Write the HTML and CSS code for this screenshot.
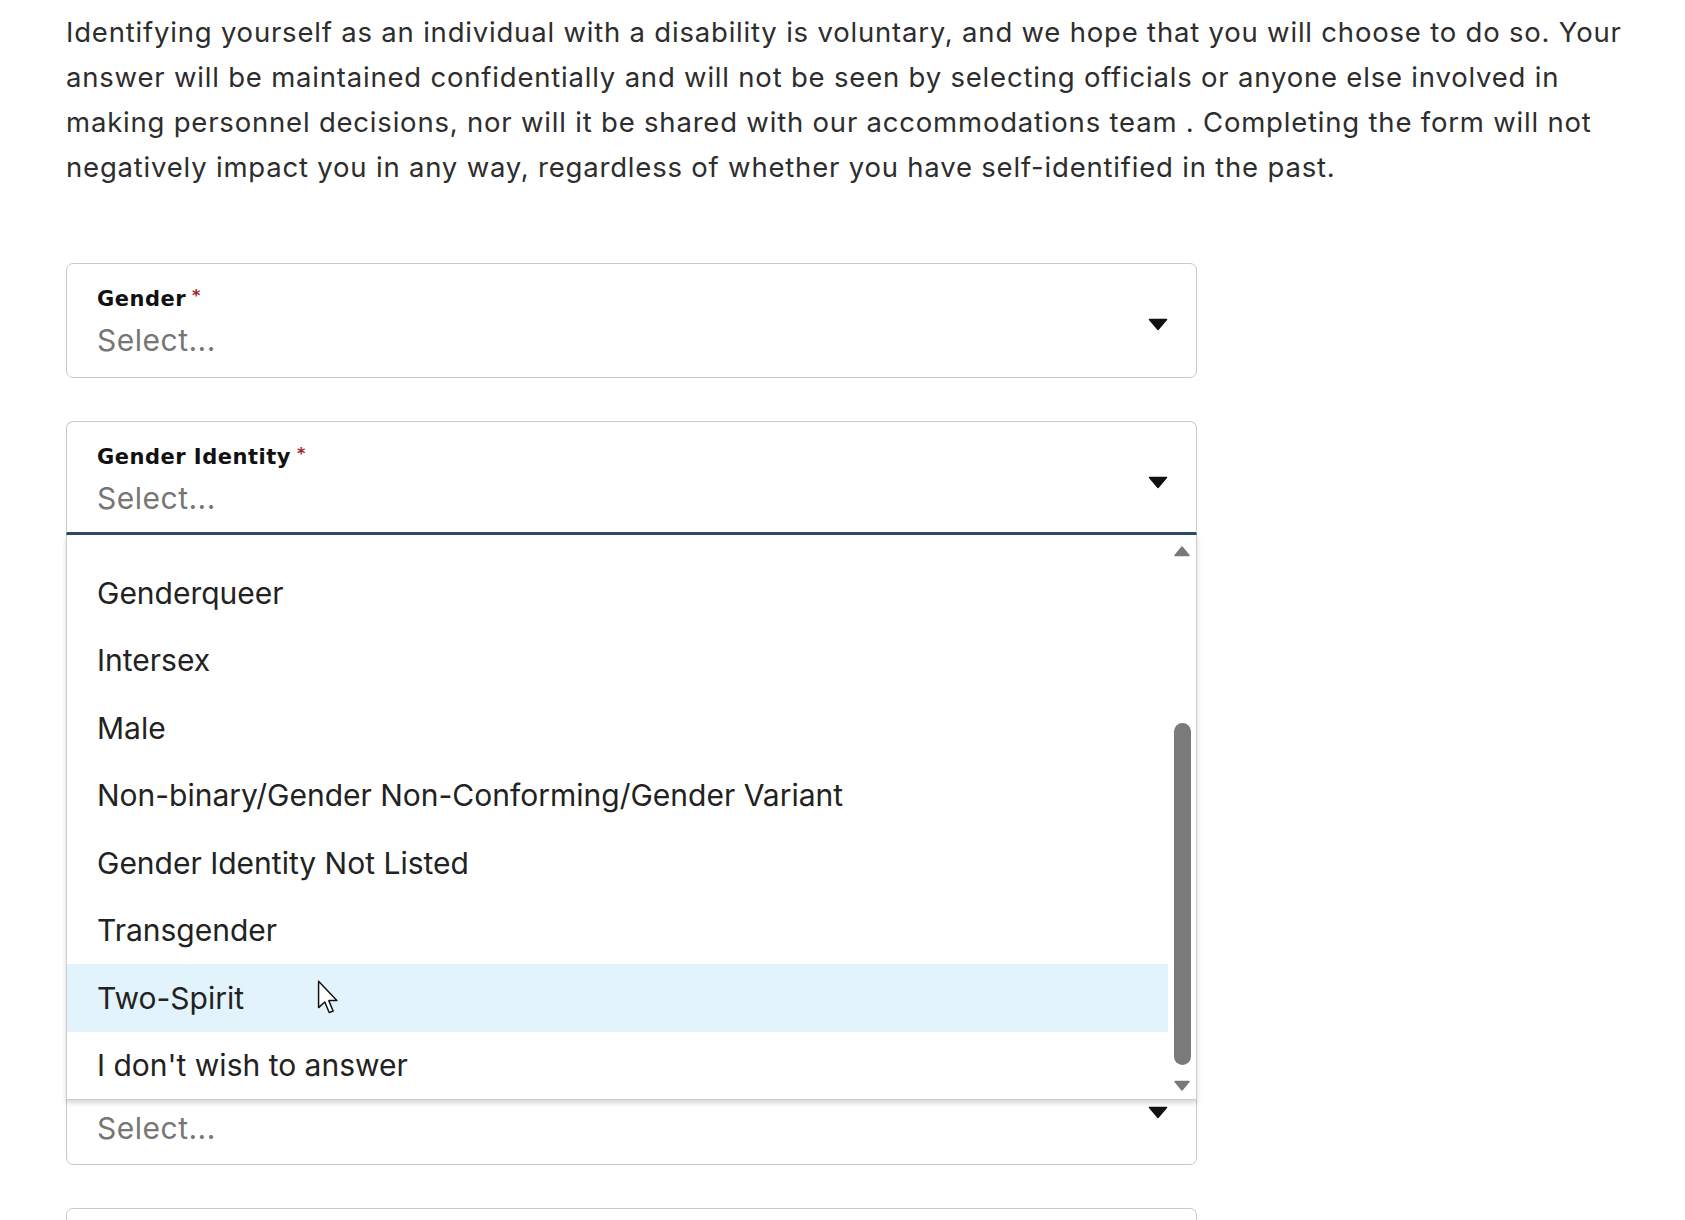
FILE: index.html
```html
<!DOCTYPE html>
<html lang="en">
<head>
<meta charset="utf-8">
<title>Voluntary Self-Identification</title>
<link rel="stylesheet" href="styles.css">
</head>
<body>
<main class="page">
  <p class="intro">Identifying yourself as an individual with a disability is voluntary, and we hope that you will choose to do so. Your answer will be maintained confidentially and will not be seen by selecting officials or anyone else involved in making personnel decisions, nor will it be shared with our accommodations team . Completing the form will not negatively impact you in any way, regardless of whether you have self-identified in the past.</p>

  <div class="eeo-form">
    <div class="select-field">
      <div class="select-text">
        <span class="select-label">Gender<span class="req">*</span></span>
        <span class="select-value">Select...</span>
      </div>
      <svg class="caret" viewBox="0 0 20 13" width="20" height="13"><path d="M1.5 1.5 H18.5 L10 11.5 Z"/></svg>
    </div>

    <div class="select-field is-open">
      <div class="select-text">
        <span class="select-label">Gender Identity<span class="req">*</span></span>
        <span class="select-value">Select...</span>
      </div>
      <svg class="caret" viewBox="0 0 20 13" width="20" height="13"><path d="M1.5 1.5 H18.5 L10 11.5 Z"/></svg>

      <div class="menu" role="listbox">
        <div class="menu-options">
          <div class="option">Agender</div>
          <div class="option">Bigender</div>
          <div class="option">Cisgender</div>
          <div class="option">Female</div>
          <div class="option">Genderqueer</div>
          <div class="option">Intersex</div>
          <div class="option">Male</div>
          <div class="option">Non-binary/Gender Non-Conforming/Gender Variant</div>
          <div class="option">Gender Identity Not Listed</div>
          <div class="option">Transgender</div>
          <div class="option is-hover">Two-Spirit</div>
          <div class="option">I don't wish to answer</div>
        </div>
        <div class="menu-scrollbar">
          <div class="sb-btn sb-up"><svg viewBox="0 0 18 12" width="18" height="12"><path d="M2 10.5 H16 L9 2 Z"/></svg></div>
          <div class="sb-track"><div class="sb-thumb" style="margin-top: 157px; height: 342px;"></div></div>
          <div class="sb-btn sb-down"><svg viewBox="0 0 18 12" width="18" height="12"><path d="M2 1.5 H16 L9 10 Z"/></svg></div>
        </div>
      </div>
    </div>

    <div class="select-field">
      <div class="select-text">
        <span class="select-label">Sexual Orientation<span class="req">*</span></span>
        <span class="select-value">Select...</span>
      </div>
      <svg class="caret" viewBox="0 0 20 13" width="20" height="13"><path d="M1.5 1.5 H18.5 L10 11.5 Z"/></svg>
    </div>

    <div class="select-field">
      <div class="select-text">
        <span class="select-label">Are you Hispanic/Latino?<span class="req">*</span></span>
        <span class="select-value">Select...</span>
      </div>
      <svg class="caret" viewBox="0 0 20 13" width="20" height="13"><path d="M1.5 1.5 H18.5 L10 11.5 Z"/></svg>
    </div>

    <div class="select-field">
      <div class="select-text">
        <span class="select-label">Race<span class="req">*</span></span>
        <span class="select-value">Select...</span>
      </div>
      <svg class="caret" viewBox="0 0 20 13" width="20" height="13"><path d="M1.5 1.5 H18.5 L10 11.5 Z"/></svg>
    </div>

    <div class="select-field">
      <div class="select-text">
        <span class="select-label">Veteran Status<span class="req">*</span></span>
        <span class="select-value">Select...</span>
      </div>
      <svg class="caret" viewBox="0 0 20 13" width="20" height="13"><path d="M1.5 1.5 H18.5 L10 11.5 Z"/></svg>
    </div>

    <div class="select-field">
      <div class="select-text">
        <span class="select-label">Disability Status<span class="req">*</span></span>
        <span class="select-value">Select...</span>
      </div>
      <svg class="caret" viewBox="0 0 20 13" width="20" height="13"><path d="M1.5 1.5 H18.5 L10 11.5 Z"/></svg>
    </div>
  </div>

  <svg class="pointer" viewBox="0 0 16 26" width="22" height="35"><path d="M1 1 V20.5 L5.6 16.3 L8.9 24.2 L11.8 23 L8.6 15.3 L14.6 15.3 Z"/></svg>
</main>
</body>
</html>
```

FILE: styles.css
```css
body {
  margin: 0;
  background: #fff;
  font-family: Inter, "Liberation Sans", Arial, sans-serif;
}

.page {
  position: relative;
  padding: 10px 40px 0 66px;
}

.intro {
  margin: 0 0 73px;
  max-width: 1570px;
  font-size: 27.5px;
  letter-spacing: 0.8px;
  line-height: 45px;
  color: #2d2d2d;
}

.eeo-form {
  width: 1131px;
  display: flex;
  flex-direction: column;
  gap: 43px;
}

/* closed select */
.select-field {
  position: relative;
  box-sizing: border-box;
  height: 114.5px;
  display: flex;
  align-items: flex-start;
  justify-content: space-between;
  padding: 23px 28px 0 30px;
  border: 1px solid #c9c9c9;
  border-radius: 7px;
  background: #fff;
}

.select-text {
  display: flex;
  flex-direction: column;
  gap: 10px;
}

.select-label {
  font-family: "DejaVu Sans", Inter, sans-serif;
  font-size: 21px;
  line-height: 25px;
  font-weight: 700;
  letter-spacing: 0.5px;
  color: #111;
}

.req {
  margin-left: 6px;
  font-size: 16px;
  line-height: 18px;
  vertical-align: top;
  color: #a3232c;
}

.select-value {
  font-size: 30px;
  letter-spacing: 0.5px;
  line-height: 37px;
  color: #767676;
}

.caret {
  flex: none;
  margin-top: 31px;
}

.caret path {
  fill: #111;
  stroke: #111;
  stroke-width: 1.5;
  stroke-linejoin: round;
}

/* open select */
.select-field.is-open {
  z-index: 2;
  border-bottom: 3px solid #2c4a6b;
  border-radius: 7px 7px 0 0;
}

.menu {
  position: absolute;
  top: calc(100% + 3px);
  left: -1px;
  right: -1px;
  height: 565px;
  box-sizing: border-box;
  display: flex;
  background: #fff;
  border: 1px solid #cdcdcd;
  border-top: 0;
  box-shadow: 0 3px 5px rgba(0, 0, 0, 0.16);
}

/* list is scrolled to its end: earlier options overflow above and are clipped */
.menu-options {
  flex: 1;
  margin-top: 25px;
  display: flex;
  flex-direction: column;
  justify-content: flex-end;
  overflow: hidden;
}

.option {
  flex: none;
  height: 67.5px;
  display: flex;
  align-items: center;
  padding-left: 30px;
  font-size: 30px;
  color: #222;
  white-space: nowrap;
}

.option.is-hover {
  background: #e2f3fc;
}

.menu-scrollbar {
  flex: none;
  width: 28px;
  display: flex;
  flex-direction: column;
  align-items: center;
}

.sb-btn {
  flex: none;
  display: flex;
  align-items: center;
  justify-content: center;
}

.sb-up {
  height: 31px;
}

.sb-down {
  height: 26px;
}

.sb-btn path {
  fill: #787878;
  stroke: #787878;
  stroke-width: 1.5;
  stroke-linejoin: round;
}

.sb-track {
  flex: 1;
  display: flex;
  flex-direction: column;
  align-items: center;
}

.sb-thumb {
  width: 17px;
  border-radius: 9px;
  background: #7a7a7a;
}

/* mouse pointer hovering the list */
.pointer {
  position: absolute;
  left: 317px;
  top: 980px;
  z-index: 10;
}

.pointer path {
  fill: #fff;
  stroke: #111;
  stroke-width: 1.1;
  stroke-linejoin: round;
}
```
